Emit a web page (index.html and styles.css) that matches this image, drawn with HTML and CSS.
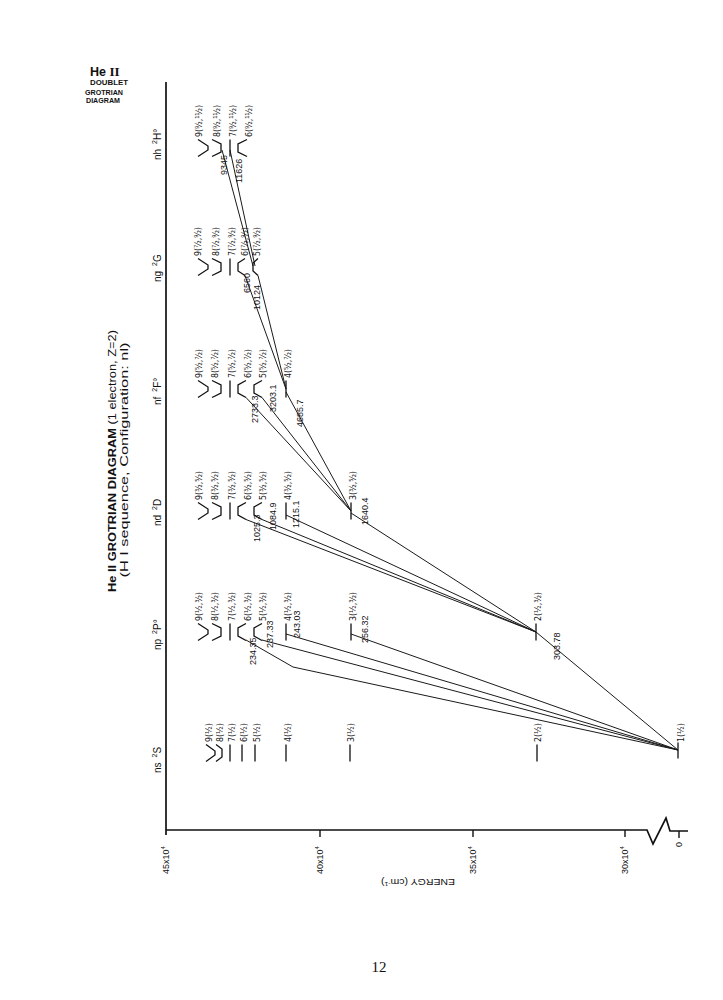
FILE: index.html
```html
<!DOCTYPE html>
<html lang="en">
<head>
<meta charset="utf-8">
<title>He II Grotrian Diagram</title>
<link rel="stylesheet" href="styles.css">
</head>
<body>
<main class="page">
<svg class="figure" viewBox="0 0 723 950" width="723" height="950" xmlns="http://www.w3.org/2000/svg">
  <!-- corner caption -->
  <text class="corner-big" x="90" y="76">He <tspan class="roman">II</tspan></text>
  <text class="corner" x="90" y="84.5" textLength="38" lengthAdjust="spacingAndGlyphs">DOUBLET</text>
  <text class="corner" x="85" y="94.5" textLength="38" lengthAdjust="spacingAndGlyphs">GROTRIAN</text>
  <text class="corner" x="86" y="103" textLength="34" lengthAdjust="spacingAndGlyphs">DIAGRAM</text>

  <!-- title -->
  <text class="title" transform="translate(116 461) rotate(-90)" text-anchor="middle" textLength="262" lengthAdjust="spacingAndGlyphs"><tspan class="bold">He II GROTRIAN DIAGRAM</tspan> (1 electron, Z=2)</text>
  <text class="title" transform="translate(128 460) rotate(-90)" text-anchor="middle" textLength="235" lengthAdjust="spacingAndGlyphs">(H I sequence, Configuration: nl)</text>

  <!-- column headings -->
  <text class="col" transform="translate(161 773) rotate(-90)">ns<tspan class="sup" dx="5" dy="-4">2</tspan><tspan dy="4">S</tspan></text>
  <text class="col" transform="translate(161 650) rotate(-90)">np<tspan class="sup" dx="5" dy="-4">2</tspan><tspan dy="4">P°</tspan></text>
  <text class="col" transform="translate(161 526) rotate(-90)">nd<tspan class="sup" dx="5" dy="-4">2</tspan><tspan dy="4">D</tspan></text>
  <text class="col" transform="translate(161 405) rotate(-90)">nf<tspan class="sup" dx="5" dy="-4">2</tspan><tspan dy="4">F°</tspan></text>
  <text class="col" transform="translate(161 282) rotate(-90)">ng<tspan class="sup" dx="5" dy="-4">2</tspan><tspan dy="4">G</tspan></text>
  <text class="col" transform="translate(161 160) rotate(-90)">nh<tspan class="sup" dx="5" dy="-4">2</tspan><tspan dy="4">H°</tspan></text>

  <!-- axes -->
  <path class="axis" d="M166 82 V835"/>
  <path class="axis" d="M166 830 H647 L653 844 L666 818 L670 831 H688"/>
  <path class="tickmark" d="M320 830 V837 M473 830 V837 M625 830 V837 M679 831 V838"/>
  <text class="tick" transform="translate(169 874) rotate(-90)">45x10<tspan class="sup-s" dy="-4">4</tspan></text>
  <text class="tick" transform="translate(323 874) rotate(-90)">40x10<tspan class="sup-s" dy="-4">4</tspan></text>
  <text class="tick" transform="translate(476 874) rotate(-90)">35x10<tspan class="sup-s" dy="-4">4</tspan></text>
  <text class="tick" transform="translate(628 874) rotate(-90)">30x10<tspan class="sup-s" dy="-4">4</tspan></text>
  <text class="tick" transform="translate(682 847) rotate(-90)">0</text>
  <text class="axis-name" transform="translate(418 879) rotate(180)" text-anchor="middle" textLength="74" lengthAdjust="spacingAndGlyphs">ENERGY (cm<tspan class="sup-s" dy="-3">-1</tspan><tspan dy="3">)</tspan></text>

  <!-- transitions -->
  <g class="trans">
    <path d="M536 632 L678 750"/>
    <path d="M351 634 L678 750"/>
    <path d="M286 634 L678 750"/>
    <path d="M262 640 L678 750"/>
    <path d="M246 640 L293 667 L678 750"/>
    <path d="M351 513 L536 632"/>
    <path d="M286 515 L536 632"/>
    <path d="M262 519.5 L536 632"/>
    <path d="M246 519.5 L536 632"/>
    <path d="M286 392 L351 511"/>
    <path d="M262 397.5 L351 511"/>
    <path d="M246 397.5 L351 511"/>
    <path d="M258 275.5 L286 389"/>
    <path d="M245 275.5 L286 389"/>
    <path d="M230 150 L255 266"/>
    <path d="M222 150 L253 266"/>
  </g>

  <!-- wavelengths -->
  <g class="wl">
    <text transform="translate(560 660) rotate(-90)">303.78</text>
    <text transform="translate(368 643) rotate(-90)">256.32</text>
    <text transform="translate(300 638) rotate(-90)">243.03</text>
    <text transform="translate(273 648) rotate(-90)">237.33</text>
    <text transform="translate(256 665) rotate(-90)">234.35</text>
    <text transform="translate(368 525) rotate(-90)">1640.4</text>
    <text transform="translate(299 528) rotate(-90)">1215.1</text>
    <text transform="translate(276 530) rotate(-90)">1084.9</text>
    <text transform="translate(260 542) rotate(-90)">1025.3</text>
    <text transform="translate(303 427) rotate(-90)">4685.7</text>
    <text transform="translate(276 412) rotate(-90)">3203.1</text>
    <text transform="translate(258 423) rotate(-90)">2733.3</text>
    <text transform="translate(250 293) rotate(-90)">6560</text>
    <text transform="translate(260 310) rotate(-90)">10124</text>
    <text transform="translate(227 175) rotate(-90)">9345</text>
    <text transform="translate(242 183) rotate(-90)">11626</text>
  </g>

  <!-- level marks -->
  <g class="mark">
    <!-- ns -->
    <path d="M678 742.5 V758.5 M537 744.5 V761.5 M350 744.5 V761.5 M286 744.5 V761.5 M255 744.5 V761.5 M242 744.5 V761.5 M230 744.5 V761.5"/>
    <polyline points="216,744.5 222,749 222,757 216,761.5"/>
    <polyline points="206,744.5 215,751 215,755 206,761.5"/>
    <!-- np -->
    <path d="M536 623.5 V640.5 M351 623.5 V640.5 M286 623.5 V640.5 M230 623.5 V640.5"/>
    <polyline points="262,623.5 254,628 254,636 262,640.5"/>
    <polyline points="246,623.5 238,628 238,636 246,640.5"/>
    <polyline points="212,623.5 221,628 221,636 212,640.5"/>
    <polyline points="198,623.5 208,630 208,634 198,640.5"/>
    <!-- nd -->
    <path d="M351 502.5 V519.5 M286 502.5 V519.5 M230 502.5 V519.5"/>
    <polyline points="262,502.5 254,507 254,515 262,519.5"/>
    <polyline points="246,502.5 238,507 238,515 246,519.5"/>
    <polyline points="212,502.5 221,507 221,515 212,519.5"/>
    <polyline points="198,502.5 208,509 208,513 198,519.5"/>
    <!-- nf -->
    <path d="M286 380.5 V397.5 M230 380.5 V397.5"/>
    <polyline points="262,380.5 254,385 254,393 262,397.5"/>
    <polyline points="246,380.5 238,385 238,393 246,397.5"/>
    <polyline points="212,380.5 221,385 221,393 212,397.5"/>
    <polyline points="198,380.5 208,387 208,391 198,397.5"/>
    <!-- ng -->
    <path d="M230 258.5 V275.5"/>
    <polyline points="258,258.5 253,263 253,271 258,275.5"/>
    <polyline points="245,258.5 238,263 238,271 245,275.5"/>
    <polyline points="212,258.5 221,263 221,271 212,275.5"/>
    <polyline points="198,258.5 208,265 208,269 198,275.5"/>
    <!-- nh -->
    <path d="M230 139.5 V156.5"/>
    <polyline points="247,139.5 238,144 238,152 247,156.5"/>
    <polyline points="212,139.5 221,144 221,152 212,156.5"/>
    <polyline points="198,139.5 208,146 208,150 198,156.5"/>
  </g>

  <!-- level labels -->
  <g class="lvl">
    <!-- ns -->
    <text transform="translate(683.5 742) rotate(-90) scale(0.83 1)">1(½)</text>
    <text transform="translate(540.5 742) rotate(-90) scale(0.83 1)">2(½)</text>
    <text transform="translate(353.5 742) rotate(-90) scale(0.83 1)">3(½)</text>
    <text transform="translate(290.5 742) rotate(-90) scale(0.83 1)">4(½)</text>
    <text transform="translate(259.5 742) rotate(-90) scale(0.83 1)">5(½)</text>
    <text transform="translate(246.5 742) rotate(-90) scale(0.83 1)">6(½)</text>
    <text transform="translate(234.5 742) rotate(-90) scale(0.83 1)">7(½)</text>
    <text transform="translate(222.5 742) rotate(-90) scale(0.83 1)">8(½)</text>
    <text transform="translate(211.5 742) rotate(-90) scale(0.83 1)">9(½)</text>
    <!-- np -->
    <text transform="translate(540.5 621) rotate(-90) scale(0.83 1)">2(½,³⁄₂)</text>
    <text transform="translate(355.5 621) rotate(-90) scale(0.83 1)">3(½,³⁄₂)</text>
    <text transform="translate(290.5 621) rotate(-90) scale(0.83 1)">4(½,³⁄₂)</text>
    <text transform="translate(265.5 621) rotate(-90) scale(0.83 1)">5(½,³⁄₂)</text>
    <text transform="translate(250.5 621) rotate(-90) scale(0.83 1)">6(½,³⁄₂)</text>
    <text transform="translate(234.5 621) rotate(-90) scale(0.83 1)">7(½,³⁄₂)</text>
    <text transform="translate(217.5 621) rotate(-90) scale(0.83 1)">8(½,³⁄₂)</text>
    <text transform="translate(201.5 621) rotate(-90) scale(0.83 1)">9(½,³⁄₂)</text>
    <!-- nd -->
    <text transform="translate(355.5 500) rotate(-90) scale(0.83 1)">3(³⁄₂,⁵⁄₂)</text>
    <text transform="translate(290.5 500) rotate(-90) scale(0.83 1)">4(³⁄₂,⁵⁄₂)</text>
    <text transform="translate(265.5 500) rotate(-90) scale(0.83 1)">5(³⁄₂,⁵⁄₂)</text>
    <text transform="translate(250.5 500) rotate(-90) scale(0.83 1)">6(³⁄₂,⁵⁄₂)</text>
    <text transform="translate(234.5 500) rotate(-90) scale(0.83 1)">7(³⁄₂,⁵⁄₂)</text>
    <text transform="translate(217.5 500) rotate(-90) scale(0.83 1)">8(³⁄₂,⁵⁄₂)</text>
    <text transform="translate(201.5 500) rotate(-90) scale(0.83 1)">9(³⁄₂,⁵⁄₂)</text>
    <!-- nf -->
    <text transform="translate(290.5 378) rotate(-90) scale(0.83 1)">4(⁵⁄₂,⁷⁄₂)</text>
    <text transform="translate(265.5 378) rotate(-90) scale(0.83 1)">5(⁵⁄₂,⁷⁄₂)</text>
    <text transform="translate(250.5 378) rotate(-90) scale(0.83 1)">6(⁵⁄₂,⁷⁄₂)</text>
    <text transform="translate(234.5 378) rotate(-90) scale(0.83 1)">7(⁵⁄₂,⁷⁄₂)</text>
    <text transform="translate(217.5 378) rotate(-90) scale(0.83 1)">8(⁵⁄₂,⁷⁄₂)</text>
    <text transform="translate(201.5 378) rotate(-90) scale(0.83 1)">9(⁵⁄₂,⁷⁄₂)</text>
    <!-- ng -->
    <text transform="translate(259.5 256) rotate(-90) scale(0.83 1)">5(⁷⁄₂,⁹⁄₂)</text>
    <text transform="translate(247.5 256) rotate(-90) scale(0.83 1)">6(⁷⁄₂,⁹⁄₂)</text>
    <text transform="translate(234.5 256) rotate(-90) scale(0.83 1)">7(⁷⁄₂,⁹⁄₂)</text>
    <text transform="translate(218.5 256) rotate(-90) scale(0.83 1)">8(⁷⁄₂,⁹⁄₂)</text>
    <text transform="translate(200.5 256) rotate(-90) scale(0.83 1)">9(⁷⁄₂,⁹⁄₂)</text>
    <!-- nh -->
    <text transform="translate(251.5 137) rotate(-90) scale(0.83 1)">6(⁹⁄₂,¹¹⁄₂)</text>
    <text transform="translate(235.5 137) rotate(-90) scale(0.83 1)">7(⁹⁄₂,¹¹⁄₂)</text>
    <text transform="translate(219.5 137) rotate(-90) scale(0.83 1)">8(⁹⁄₂,¹¹⁄₂)</text>
    <text transform="translate(201.5 137) rotate(-90) scale(0.83 1)">9(⁹⁄₂,¹¹⁄₂)</text>
  </g>
</svg>
<footer class="folio">12</footer>
</main>
</body>
</html>
```

FILE: styles.css
```css
html, body {
  margin: 0;
  padding: 0;
  background: #ffffff;
}

.page {
  width: 723px;
  height: 1000px;
  overflow: hidden;
  color: #111;
}

.figure {
  display: block;
}

.folio {
  margin-top: 7px;
  padding-left: 35px;
  text-align: center;
  font: 15px/20px "Liberation Serif", "DejaVu Serif", serif;
  color: #111;
}

.corner-big {
  font: bold 12.5px "Liberation Sans", "DejaVu Sans", sans-serif;
  fill: #111;
}
.corner-big .roman {
  font-family: "Liberation Serif", "DejaVu Serif", serif;
  font-size: 13px;
}
.corner {
  font: bold 8px "Liberation Sans", "DejaVu Sans", sans-serif;
  fill: #111;
}

.title {
  font: 10.5px "Liberation Sans", "DejaVu Sans", sans-serif;
  fill: #111;
}
.title .bold {
  font-weight: bold;
}

.col {
  font: 10px "Liberation Sans", "DejaVu Sans", sans-serif;
  fill: #111;
}
.col .sup {
  font-size: 7px;
}

.axis {
  fill: none;
  stroke: #111;
  stroke-width: 1.7;
  stroke-linejoin: miter;
}
.tickmark {
  fill: none;
  stroke: #111;
  stroke-width: 1.4;
}
.tick {
  font: 9px "Liberation Sans", "DejaVu Sans", sans-serif;
  fill: #111;
}
.sup-s {
  font-size: 6px;
}
.axis-name {
  font: 9.5px "Liberation Sans", "DejaVu Sans", sans-serif;
  fill: #111;
}

.trans path {
  fill: none;
  stroke: #1a1a1a;
  stroke-width: 1;
}

.wl {
  font: 9px "Liberation Sans", "DejaVu Sans", sans-serif;
  fill: #111;
}

.mark path,
.mark polyline {
  fill: none;
  stroke: #111;
  stroke-width: 1.3;
}

.lvl {
  font: 9.5px "DejaVu Sans", "Liberation Sans", sans-serif;
  fill: #111;
}
```
